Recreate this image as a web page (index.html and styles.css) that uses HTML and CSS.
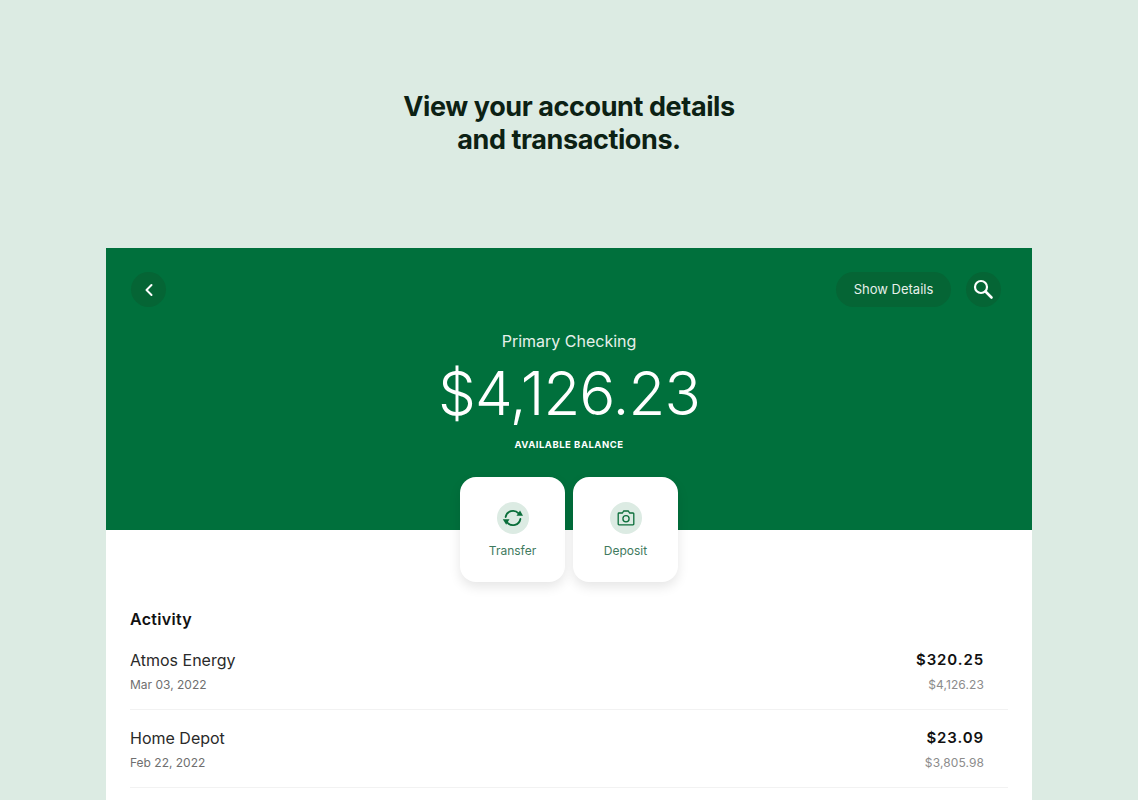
FILE: index.html
```html
<!DOCTYPE html>
<html>
<head>
  <title>Account details</title>
  <link rel="stylesheet" href="styles.css">
</head>
<body>
  <h1 class="headline">View your account details<br>and transactions.</h1>

  <div class="screen">
    <div class="account-header">
      <div class="top-bar">
        <button class="round-btn back-btn">
          <svg width="12" height="14" viewBox="0 0 12 14"><path d="M8.5 2 L3.5 7 L8.5 12" fill="none" stroke="#fff" stroke-width="2" stroke-linecap="round" stroke-linejoin="round"/></svg>
        </button>
        <div class="top-actions">
          <button class="details-btn">Show Details</button>
          <button class="round-btn">
            <svg width="22" height="22" viewBox="1 1 22 22"><circle cx="9" cy="9" r="6" fill="none" stroke="#fff" stroke-width="2.2"/><path d="M13.5 13.5 L19.5 19.5" stroke="#fff" stroke-width="2.6" stroke-linecap="round"/></svg>
          </button>
        </div>
      </div>
      <div class="account-name">Primary Checking</div>
      <div class="balance">$4,126.23</div>
      <div class="balance-label">AVAILABLE BALANCE</div>
    </div>

    <div class="actions">
      <div class="action-card">
        <span class="action-icon">
          <svg width="22" height="22" viewBox="0 0 22 22" fill="none" stroke="#0a6e3a" stroke-width="1.8" stroke-linecap="round">
            <path d="M3.6 10 A7.5 7.5 0 0 1 16.6 6.4"/>
            <path d="M18.4 12 A7.5 7.5 0 0 1 5.4 15.6"/>
            <path d="M14.5 8.8 L21 8.8 L18 3.6 Z" fill="#0a6e3a" stroke="none"/>
            <path d="M.8 12.2 L7.5 12.2 L4.2 17.8 Z" fill="#0a6e3a" stroke="none"/>
          </svg>
        </span>
        <span class="action-label">Transfer</span>
      </div>
      <div class="action-card">
        <span class="action-icon">
          <svg width="20" height="20" viewBox="0 0 20 20" fill="none" stroke="#0a6e3a" stroke-width="1.3" stroke-linejoin="round">
            <path d="M3 5 H6.5 L7.6 3 H12.4 L13.5 5 H17 A.8 .8 0 0 1 17.8 5.8 V16 A.8 .8 0 0 1 17 16.8 H3 A.8 .8 0 0 1 2.2 16 V5.8 A.8 .8 0 0 1 3 5 Z"/>
            <circle cx="10" cy="10.8" r="3.1"/>
          </svg>
        </span>
        <span class="action-label">Deposit</span>
      </div>
    </div>

    <div class="activity">
      <h2 class="activity-title">Activity</h2>
      <div class="txn">
        <div class="txn-row">
          <span class="txn-name">Atmos Energy</span>
          <span class="txn-amount">$320.25</span>
        </div>
        <div class="txn-row txn-sub">
          <span>Mar 03, 2022</span>
          <span class="txn-balance">$4,126.23</span>
        </div>
      </div>
      <div class="txn">
        <div class="txn-row">
          <span class="txn-name">Home Depot</span>
          <span class="txn-amount">$23.09</span>
        </div>
        <div class="txn-row txn-sub">
          <span>Feb 22, 2022</span>
          <span class="txn-balance">$3,805.98</span>
        </div>
      </div>
    </div>
  </div>
</body>
</html>
```

FILE: styles.css
```css
html, body {
  height: 800px;
  overflow: hidden;
}

body {
  margin: 0;
  background-color: #dcebe3;
  font-family: Inter, "Liberation Sans", sans-serif;
}

.headline {
  margin: 0;
  padding-top: 90px;
  height: 248px;
  box-sizing: border-box;
  text-align: center;
  font-size: 27px;
  line-height: 33px;
  font-weight: 700;
  letter-spacing: -0.4px;
  color: #0c2114;
}

.screen {
  width: 926px;
  height: 552px;
  margin-left: 106px;
  background-color: #fff;
}

.account-header {
  height: 282px;
  box-sizing: border-box;
  padding: 24px 24px 0;
  background-color: #00703c;
  text-align: center;
  color: #fff;
}

.top-bar {
  display: flex;
  justify-content: space-between;
  align-items: center;
}

.top-actions {
  display: flex;
  align-items: center;
  gap: 15px;
  margin-right: 7px;
}

.round-btn {
  display: flex;
  align-items: center;
  justify-content: center;
  width: 35px;
  height: 35px;
  padding: 0;
  border: none;
  border-radius: 50%;
  background-color: #056535;
}

.back-btn {
  margin-left: 1px;
}

.details-btn {
  height: 35px;
  width: 115px;
  padding: 0 0 1px;
  border: none;
  border-radius: 18px;
  background-color: #056535;
  color: #e6f0ea;
  font-family: inherit;
  font-size: 13px;
}

.account-name {
  margin-top: 24px;
  font-size: 16px;
  line-height: 20px;
  color: #e6f0ea;
}

.balance {
  margin-top: 6px;
  font-size: 60px;
  line-height: 72px;
  font-weight: 300;
  letter-spacing: -0.9px;
}

.balance-label {
  margin-top: 10px;
  font-size: 9.5px;
  line-height: 12px;
  font-weight: 700;
  letter-spacing: 0.5px;
}

.actions {
  display: flex;
  justify-content: center;
  gap: 8px;
  margin-top: -53px;
}

.action-card {
  display: flex;
  flex-direction: column;
  align-items: center;
  width: 105px;
  height: 105px;
  box-sizing: border-box;
  padding-top: 25px;
  border-radius: 16px;
  background-color: #fff;
  box-shadow: 0 5px 12px rgba(0, 0, 0, 0.1);
}

.action-icon {
  display: flex;
  align-items: center;
  justify-content: center;
  width: 32px;
  height: 32px;
  border-radius: 50%;
  background-color: #dcebe3;
}

.action-label {
  margin-top: 9px;
  font-size: 12px;
  line-height: 16px;
  color: #3f7a5e;
}

.activity {
  padding: 27px 24px 0;
}

.activity-title {
  margin: 0 0 3px;
  font-size: 16px;
  line-height: 20px;
  font-weight: 600;
  letter-spacing: 0.3px;
  color: #111;
}

.txn {
  height: 78px;
  box-sizing: border-box;
  padding: 18px 24px 0 0;
  border-bottom: 1px solid #f2f2f2;
}

.txn-row {
  display: flex;
  justify-content: space-between;
  align-items: center;
}

.txn-name {
  font-size: 16px;
  line-height: 20px;
  color: #2a2a2a;
}

.txn-amount {
  font-size: 15px;
  line-height: 20px;
  font-weight: 600;
  letter-spacing: 0.9px;
  color: #111;
}

.txn-sub {
  margin-top: 7px;
  font-size: 12px;
  line-height: 16px;
  color: #6f6f6f;
}

.txn-balance {
  color: #8c8c8c;
  letter-spacing: 0.1px;
}
```
